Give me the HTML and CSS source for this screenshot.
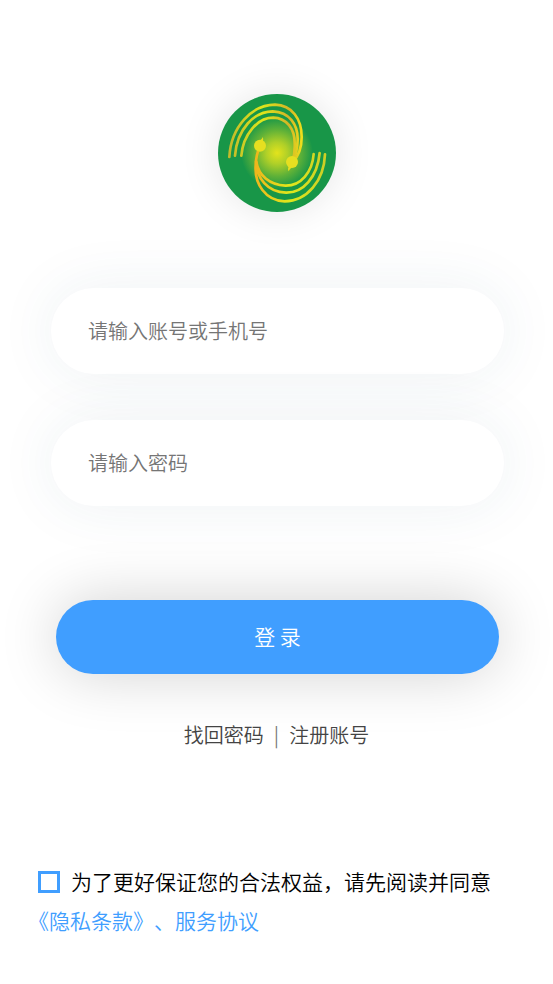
FILE: index.html
```html
<!DOCTYPE html>
<html lang="zh-CN">
<head>
    <meta charset="UTF-8">
    <meta name="viewport" content="width=device-width, initial-scale=1.0">
    <title>登录</title>
    <link rel="stylesheet" href="styles.css">
</head>
<body>

<main class="login">
    <div class="logo">
        <svg viewBox="33 33 354 354" aria-hidden="true">
            <defs>
                <radialGradient id="glow" gradientUnits="userSpaceOnUse" cx="210" cy="210" r="108">
                    <stop offset="0" stop-color="#e3e31c"/>
                    <stop offset="0.3" stop-color="#b0d028"/>
                    <stop offset="0.65" stop-color="#5eb138"/>
                    <stop offset="1" stop-color="#189648"/>
                </radialGradient>
                <linearGradient id="top" gradientUnits="userSpaceOnUse" x1="65" y1="0" x2="290" y2="0">
                    <stop offset="0" stop-color="#c2b92a"/>
                    <stop offset="0.45" stop-color="#dde61c"/>
                    <stop offset="0.8" stop-color="#d3b526"/>
                    <stop offset="1" stop-color="#f1e41a"/>
                </linearGradient>
                <linearGradient id="bottom" gradientUnits="userSpaceOnUse" x1="355" y1="0" x2="142" y2="0">
                    <stop offset="0" stop-color="#cdcf25"/>
                    <stop offset="0.5" stop-color="#dfe81c"/>
                    <stop offset="1" stop-color="#f0b41c"/>
                </linearGradient>
            </defs>
            <circle cx="210" cy="210" r="177" fill="#189648"/>
            <circle cx="210" cy="210" r="108" fill="url(#glow)"/>
            <g fill="none" stroke="url(#top)" stroke-width="8" stroke-linecap="round">
                <path d="M67 222C72 130 136 65 204 65C255 67 284 107 284 162C284 194 273 221 256 238"/>
                <path d="M84 218C90 138 142 85 197 85C247 87 273 124 272 171C271 198 267 215 258 234"/>
                <path d="M103 218C108 155 151 104 199 104C239 105 263 138 263 180C264 202 262 218 256 234"/>
            </g>
            <g fill="none" stroke="url(#bottom)" stroke-width="8" stroke-linecap="round">
                <path d="M354 214C351 293 300 355 233 355C175 353 142 302 146 247C147 223 151 207 158 194"/>
                <path d="M338 210C331 283 288 330 237 329C181 327 149 286 147 235"/>
                <path d="M320 213C316 268 281 309 235 308C187 306 155 277 148 237"/>
            </g>
            <g fill="#e6df20">
                <circle cx="159" cy="188" r="18"/>
                <path d="M149 175C158 174 166 169 167 162C170 169 169 175 164 181Z"/>
                <circle cx="255" cy="237" r="18"/>
                <path d="M265 250C256 251 248 257 245 265C241 258 243 251 250 245Z"/>
            </g>
        </svg>
    </div>

    <form class="login-form">
        <input class="field" type="text" placeholder="请输入账号或手机号" aria-label="账号或手机号">
        <input class="field" type="password" placeholder="请输入密码" aria-label="密码">
        <button class="submit" type="button">登 录</button>
    </form>

    <nav class="links">
        <a href="#">找回密码</a>
        <span class="divider">|</span>
        <a href="#">注册账号</a>
    </nav>

    <div class="agreement">
        <input type="checkbox" id="agree">
        <label for="agree">为了更好保证您的合法权益，请先阅读并同意</label>
        <div class="terms"><a href="#">《隐私条款》</a><a href="#">、服务协议</a></div>
    </div>
</main>

</body>
</html>
```

FILE: styles.css
```css
* {
    box-sizing: border-box;
}

body {
    margin: 0;
    background-color: #fff;
    color: #000;
    font-family: "Noto Sans CJK SC", sans-serif;
    font-size: 20px;
    font-weight: 350;
    text-spacing-trim: space-all;
}

a {
    color: inherit;
    text-decoration: none;
}

.login {
    padding: 94px 0 40px;
}

.logo {
    width: 118px;
    height: 118px;
    margin: 0 auto 76px;
    border-radius: 50%;
    box-shadow: 0 0 40px rgba(0, 0, 0, 0.1);
}

.logo svg {
    display: block;
    width: 100%;
    height: 100%;
}

.login-form {
    display: flex;
    flex-direction: column;
    padding: 0 49px 0 51px;
}

/* 输入框 */
.field {
    width: 100%;
    height: 86px;
    margin-bottom: 46px;
    padding: 0 37px 2px;
    border: none;
    border-radius: 43px;
    background-color: #fff;
    box-shadow: 0 0 60px rgba(43, 86, 112, 0.08);
    font-family: inherit;
    font-size: 20px;
    font-weight: inherit;
    outline: none;
}

.field::placeholder {
    color: #757575;
}

/* 登录按钮 */
.submit {
    height: 74px;
    margin: 48px 5px 0;
    padding: 0 0 2px;
    border: none;
    border-radius: 37px;
    background-color: #409eff;
    box-shadow: 0 0 60px rgba(0, 0, 0, 0.18);
    color: #fff;
    font-family: inherit;
    font-size: 21px;
    font-weight: inherit;
    cursor: pointer;
}

.links {
    display: flex;
    justify-content: center;
    gap: 10px;
    margin-top: 46px;
    color: #444;
    line-height: 30px;
}

.divider {
    color: #777;
}

/* 底部协议 */
.agreement {
    display: grid;
    grid-template-columns: 22px 1fr;
    column-gap: 11px;
    align-items: center;
    margin-top: 112px;
    padding: 0 28px 0 38px;
    font-size: 21px;
    line-height: 39px;
}

.agreement label {
    white-space: nowrap;
}

.agreement input {
    width: 22px;
    height: 22px;
    margin: 0;
    border: 3px solid #409eff;
    background-color: #fff;
    appearance: none;
}

.agreement input:checked {
    background-color: #409eff;
}

.terms {
    grid-column: 1 / -1;
    margin-left: -10px;
    color: #409eff;
}
```
